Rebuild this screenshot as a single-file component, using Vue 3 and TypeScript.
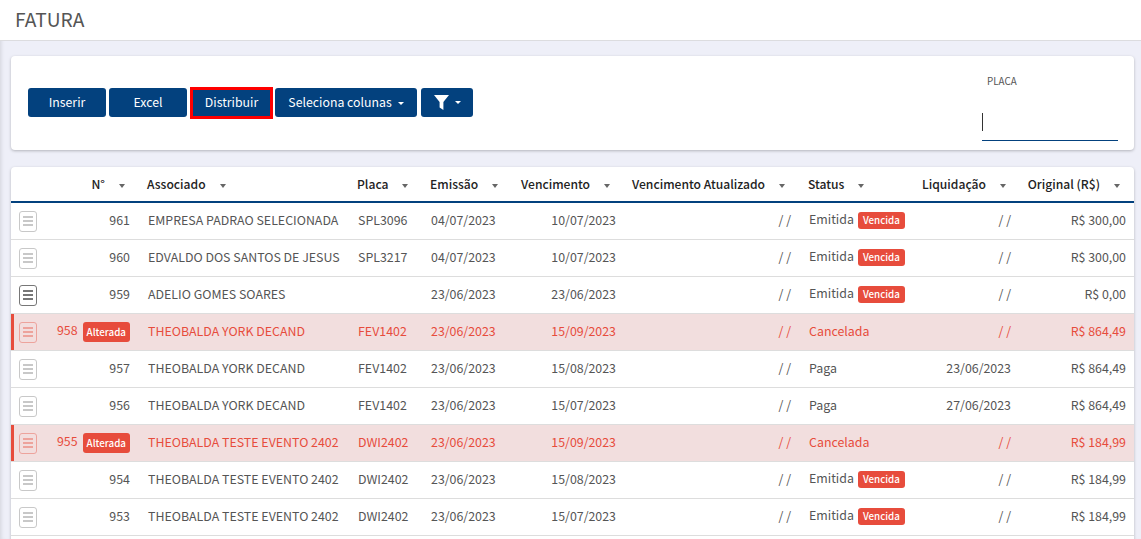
<script setup lang="ts">
// linhas da listagem de faturas
interface Fatura {
  id: number;
  alterada?: boolean;
  nome: string;
  placa: string;
  emissao: string;
  vencimento: string;
  status: string;
  vencida?: boolean;
  liquidacao: string;
  original: string;
  ativo?: boolean;
}

const colunas = [
  { key: 'acao', label: '', alinha: 'left' },
  { key: 'num', label: 'N°', alinha: 'right' },
  { key: 'nome', label: 'Associado', alinha: 'left' },
  { key: 'placa', label: 'Placa', alinha: 'left' },
  { key: 'emissao', label: 'Emissão', alinha: 'left' },
  { key: 'venc', label: 'Vencimento', alinha: 'right' },
  { key: 'atual', label: 'Vencimento Atualizado', alinha: 'right' },
  { key: 'status', label: 'Status', alinha: 'left' },
  { key: 'liq', label: 'Liquidação', alinha: 'right' },
  { key: 'orig', label: 'Original (R$)', alinha: 'right' },
];

const faturas: Fatura[] = [
  { id: 961, nome: 'EMPRESA PADRAO SELECIONADA', placa: 'SPL3096', emissao: '04/07/2023', vencimento: '10/07/2023', status: 'Emitida', vencida: true, liquidacao: '/ /', original: 'R$ 300,00' },
  { id: 960, nome: 'EDVALDO DOS SANTOS DE JESUS', placa: 'SPL3217', emissao: '04/07/2023', vencimento: '10/07/2023', status: 'Emitida', vencida: true, liquidacao: '/ /', original: 'R$ 300,00' },
  { id: 959, nome: 'ADELIO GOMES SOARES', placa: '', emissao: '23/06/2023', vencimento: '23/06/2023', status: 'Emitida', vencida: true, liquidacao: '/ /', original: 'R$ 0,00', ativo: true },
  { id: 958, alterada: true, nome: 'THEOBALDA YORK DECAND', placa: 'FEV1402', emissao: '23/06/2023', vencimento: '15/09/2023', status: 'Cancelada', liquidacao: '/ /', original: 'R$ 864,49' },
  { id: 957, nome: 'THEOBALDA YORK DECAND', placa: 'FEV1402', emissao: '23/06/2023', vencimento: '15/08/2023', status: 'Paga', liquidacao: '23/06/2023', original: 'R$ 864,49' },
  { id: 956, nome: 'THEOBALDA YORK DECAND', placa: 'FEV1402', emissao: '23/06/2023', vencimento: '15/07/2023', status: 'Paga', liquidacao: '27/06/2023', original: 'R$ 864,49' },
  { id: 955, alterada: true, nome: 'THEOBALDA TESTE EVENTO 2402', placa: 'DWI2402', emissao: '23/06/2023', vencimento: '15/09/2023', status: 'Cancelada', liquidacao: '/ /', original: 'R$ 184,99' },
  { id: 954, nome: 'THEOBALDA TESTE EVENTO 2402', placa: 'DWI2402', emissao: '23/06/2023', vencimento: '15/08/2023', status: 'Emitida', vencida: true, liquidacao: '/ /', original: 'R$ 184,99' },
  { id: 953, nome: 'THEOBALDA TESTE EVENTO 2402', placa: 'DWI2402', emissao: '23/06/2023', vencimento: '15/07/2023', status: 'Emitida', vencida: true, liquidacao: '/ /', original: 'R$ 184,99' },
];
</script>

<template>
  <div class="page">
    <header class="topo">FATURA</header>

    <section class="card filtros">
      <div class="botoes">
        <button class="btn largo">Inserir</button>
        <button class="btn largo">Excel</button>
        <button class="btn destaque">Distribuir</button>
        <button class="btn colunas">Seleciona colunas<i class="seta"></i></button>
        <button class="btn filtro">
          <svg width="15" height="15" viewBox="0 0 15 15"><path d="M0 0h15L9.4 7v8L5.6 12.4V7z" fill="#fff" /></svg>
          <i class="seta"></i>
        </button>
      </div>
      <div class="campo">
        <label>PLACA</label>
        <div class="entrada"><span class="cursor"></span></div>
      </div>
    </section>

    <section class="card tabela">
      <table>
        <colgroup>
          <col v-for="c in colunas" :key="c.key" :class="'c-' + c.key" />
        </colgroup>
        <thead>
          <tr>
            <th v-for="c in colunas" :key="c.key" :class="c.alinha">
              <template v-if="c.label">{{ c.label }}<i class="seta escura"></i></template>
            </th>
          </tr>
        </thead>
        <tbody>
          <tr v-for="f in faturas" :key="f.id" :class="{ alterada: f.alterada }">
            <td class="acao">
              <span class="menu" :class="{ ativo: f.ativo }"><i></i><i></i><i></i></span>
            </td>
            <td class="right">
              {{ f.id }}<span v-if="f.alterada" class="badge grande">Alterada</span>
            </td>
            <td>{{ f.nome }}</td>
            <td>{{ f.placa }}</td>
            <td>{{ f.emissao }}</td>
            <td class="right">{{ f.vencimento }}</td>
            <td class="right">/ /</td>
            <td class="status" :class="{ vencida: f.vencida }">
              {{ f.status }}<span v-if="f.vencida" class="badge">Vencida</span>
            </td>
            <td class="right">{{ f.liquidacao }}</td>
            <td class="right">{{ f.original }}</td>
          </tr>
          <tr><td class="vazia" colspan="10"></td></tr>
        </tbody>
      </table>
    </section>
  </div>
</template>

<style>
html,
body {
  margin: 0;
  overflow: hidden;
}
</style>

<style scoped>
.page {
  height: 100vh;
  overflow: hidden;
  background: #eeeff8;
  font-family: "Noto Sans CJK SC", "Noto Sans", sans-serif;
  color: #555;
  box-shadow: inset 4px 0 4px -3px rgba(0, 0, 0, 0.12);
}
.topo {
  height: 40px;
  line-height: 39px;
  padding-left: 15px;
  background: #fff;
  border-bottom: 1px solid #dcdcdf;
  font-size: 19.2px;
  color: #555;
}
.card {
  margin: 0 7px 0 11px;
  background: #fff;
  border-radius: 4px;
  box-shadow: 0 1px 3px rgba(0, 0, 0, 0.25);
}
.filtros {
  margin-top: 15px;
  height: 94px;
  padding: 0 16px 0 17px;
  display: flex;
  justify-content: space-between;
  align-items: center;
}
.botoes {
  display: flex;
  align-items: center;
  gap: 3px;
  margin-bottom: 1px;
}
.btn {
  height: 29px;
  padding: 0;
  border: 0;
  border-radius: 3px;
  background: #03417e;
  color: #fff;
  font: 400 12.3px/27px "Noto Sans CJK SC", "Noto Sans", sans-serif;
  box-sizing: border-box;
}
.largo {
  width: 78px;
}
.destaque {
  width: 83px;
  height: 32px;
  line-height: 25px;
  border: 3px solid #f00;
  border-radius: 0;
}
.colunas {
  width: 142px;
  margin-left: -1px;
}
.filtro {
  width: 52px;
  margin-left: 1px;
  display: flex;
  align-items: center;
  justify-content: center;
}
.seta {
  display: inline-block;
  width: 0;
  height: 0;
  margin-left: 6px;
  vertical-align: middle;
  border-left: 3px solid transparent;
  border-right: 3px solid transparent;
  border-top: 3px solid #fff;
}
.seta.escura {
  margin: 0 6px 0 14px;
  border-left-width: 3.5px;
  border-right-width: 3.5px;
  border-top: 4px solid #666;
}
.campo {
  align-self: stretch;
  width: 136px;
  display: flex;
  flex-direction: column;
}
.campo label {
  margin: 18px 0 0 5px;
  font-size: 9.8px;
  line-height: 14px;
  color: #555;
}
.entrada {
  margin-top: 25px;
  height: 27px;
  border-bottom: 1px solid #03417e;
}
.cursor {
  display: block;
  width: 1px;
  height: 18px;
  background: #333;
}
.tabela {
  margin-top: 17px;
}
table {
  width: 100%;
  table-layout: fixed;
  border-collapse: collapse;
  font-size: 12.4px;
}
.c-acao { width: 39px; }
.c-num { width: 88px; }
.c-nome { width: 210px; }
.c-placa { width: 73px; }
.c-emissao { width: 91px; }
.c-venc { width: 111px; }
.c-atual { width: 175px; }
.c-status { width: 115px; }
.c-liq { width: 105px; }
th {
  height: 33px;
  padding: 0 8px 1px 9px;
  border-bottom: 2px solid #03417e;
  font-size: 12.1px;
  font-weight: 500;
  color: #222;
  white-space: nowrap;
}
th.left {
  text-align: left;
}
th.right {
  text-align: right;
  padding-right: 7px;
}
th:last-child {
  padding-right: 8px;
}
th:nth-child(8) {
  padding-left: 10px;
}
td {
  height: 34px;
  padding: 0 8px 2px 10px;
  border-bottom: 1px solid #ddd;
  line-height: 20px;
  white-space: nowrap;
}
td.right {
  text-align: right;
  padding: 0 7px 2px 0;
}
td.right:nth-child(2),
td.right:last-child {
  padding-right: 8px;
}
td.status {
  padding-left: 11px;
}
td.status.vencida {
  padding-bottom: 4px;
  height: 32px;
}
td.acao {
  padding: 0 0 0 8px;
  height: 36px;
}
td.vazia {
  padding: 0;
  border: 0;
}
.alterada td {
  background: #f2dede;
  color: #e74c3c;
}
.alterada td:first-child {
  box-shadow: inset 3px 0 0 #e74c3c;
}
.menu {
  display: flex;
  flex-direction: column;
  justify-content: center;
  gap: 2px;
  width: 18px;
  height: 21px;
  box-sizing: border-box;
  padding: 0 3px;
  border: 1px solid #777;
  border-radius: 3px;
  opacity: 0.4;
}
.menu.ativo {
  opacity: 1;
}
.menu i {
  height: 2px;
  background: #777;
}
.alterada .menu {
  border-color: #e74c3c;
}
.alterada .menu i {
  background: #e74c3c;
}
.badge {
  display: inline-block;
  height: 17px;
  margin-left: 4px;
  padding: 0 5px;
  border-radius: 3px;
  background: #e74c3c;
  color: #fff;
  font-size: 9.8px;
  font-weight: 500;
  line-height: 17px;
  vertical-align: middle;
}
.badge.grande {
  height: 20px;
  margin-left: 5px;
  line-height: 20px;
  padding: 0 4px;
}
</style>
